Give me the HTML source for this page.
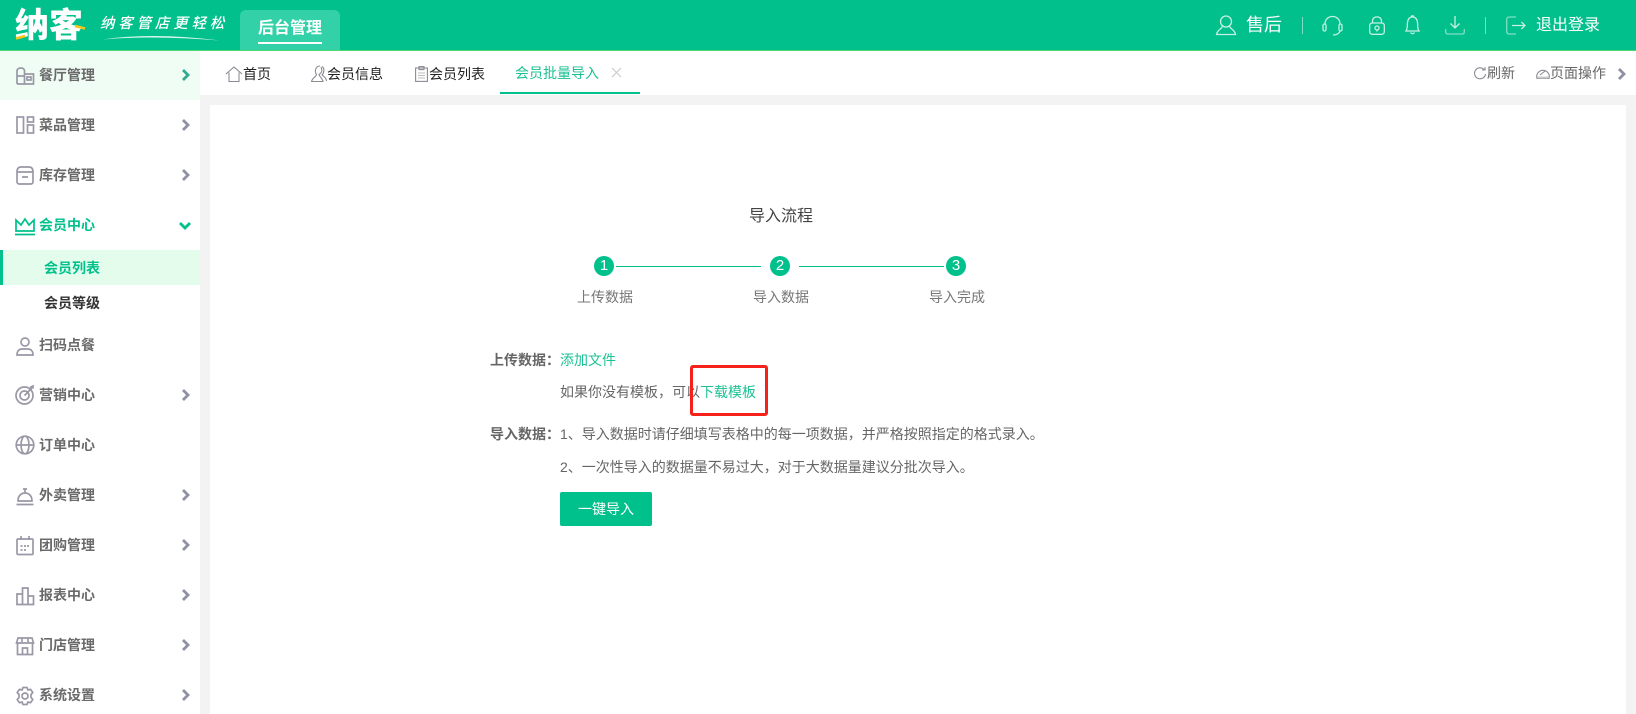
<!DOCTYPE html>
<html lang="zh-CN">
<head>
<meta charset="utf-8">
<title>会员批量导入</title>
<style>
html,body{margin:0;padding:0;width:1636px;height:714px;overflow:hidden;background:#f3f3f3}
body{position:relative;font-family:"Liberation Sans","Noto Sans CJK SC",sans-serif;font-size:14px;color:#666}
.b{position:absolute}
.t{position:absolute;line-height:20px;height:20px;white-space:nowrap}
.m{font-weight:700;color:#6a6a6a;left:39px}
svg{position:absolute;overflow:visible;fill:none}
.i{stroke:#9a98a6;stroke-width:1.7;width:20px;height:20px;left:15px}
.h{stroke:#c5f0e2;stroke-width:1.3;width:22px;height:22px}
.c{stroke:#8f90a4;stroke-width:2.800;width:8px;height:12px;left:182px}
.n{position:absolute;width:20px;height:20px;border-radius:50%;background:#00c08b;color:#fff;text-align:center;line-height:20px;font-size:15px}
</style>
</head>
<body>
<!-- header -->
<div class="b" style="left:0;top:0;width:1636px;height:50px;background:#02c08c"></div>
<div class="b" style="left:0;top:50px;width:1636px;height:1px;background:#4fd873"></div>
<div class="t" style="left:15px;top:8px;height:36px;line-height:36px;font-size:34px;font-weight:900;color:#fff">纳客</div>
<svg style="left:15px;top:30px;width:75px;height:12px"><path d="M1 8.500L10 6" stroke="#f5c518" stroke-width="2.500"/><path d="M60 -4L70 -1.500" stroke="#f5c518" stroke-width="2.500"/></svg>
<div class="t" style="left:100px;top:14px;font-size:14.500px;color:#fff;letter-spacing:3.800px;font-style:italic;font-weight:500">纳客管店更轻松</div>
<svg style="left:102px;top:33px;width:120px;height:10px"><path d="M1 6.500Q50 -1 118 7.500Q50 2 1 6.500Z" fill="#fff" fill-opacity=".85"/></svg>
<div class="b" style="left:240px;top:10px;width:100px;height:40px;background:#33d1a8;border-radius:6px 6px 0 0"></div>
<div class="t" style="left:258px;top:19px;font-size:16px;font-weight:700;color:#fff">后台管理</div>
<div class="b" style="left:258px;top:42px;width:64px;height:2px;background:#fff"></div>

<svg class="h" style="left:1216px;top:15px;width:20px;height:20px" viewBox="0 0 20 20"><circle cx="10" cy="6.500" r="5.500"/><path d="M6.500 11C6.500 13.500 1 15 .5 19.500H19.500C19 15 13.500 13.500 13.500 11"/></svg>
<div class="t" style="left:1246px;top:15px;font-size:18px;color:#fff">售后</div>
<div class="b" style="left:1302px;top:17px;width:1px;height:17px;background:#7fdcc2"></div>
<svg class="h" style="left:1322px;top:15px;width:21px;height:21px" viewBox="0 0 21 21"><path d="M3 9C3 -1 18 -1 18 9"/><rect x="1" y="9" width="3" height="7" rx="1.500"/><rect x="17" y="9" width="3" height="7" rx="1.500"/><path d="M18 16C17 19 14 20 11 20"/></svg>
<svg class="h" style="left:1369px;top:16px;width:16px;height:19px" viewBox="0 0 16 19"><rect x=".7" y="7" width="14.600" height="11.300" rx="2.500"/><path d="M3.500 7V5C3.500 -.5 12.500 -.5 12.500 5V7"/><circle cx="8" cy="12" r="2"/><path d="M8 14V15.500"/></svg>
<svg class="h" style="left:1405px;top:15px;width:15px;height:20px" viewBox="0 0 15 20"><path d="M1 16C3 13 2 10 2.500 7.500C3 3.500 5 2 7.500 2C10 2 12 3.500 12.500 7.500C13 10 12 13 14 16Z"/><path d="M6 1.500Q7.500 0 9 1.500M5.500 17.500Q7.500 20 9.500 17.500"/></svg>
<svg class="h" style="left:1445px;top:15px;width:20px;height:20px" viewBox="0 0 20 20"><path d="M10 1V13M5.500 8.500L10 13L14.500 8.500"/><path d="M.7 14V17C.7 18.500 1.500 19 3 19H17C18.500 19 19.300 18.500 19.300 17V14" stroke="#80dfc4"/></svg>
<div class="b" style="left:1485px;top:17px;width:1px;height:17px;background:#7fdcc2"></div>
<svg class="h" style="left:1506px;top:16px;width:20px;height:19px" viewBox="0 0 20 19"><path d="M10 1H3.500C1.500 1 .7 2 .7 3.500V15.500C.7 17 1.500 18 3.500 18H10" stroke="#80dfc4"/><path d="M6 9.500H19M15.500 6L19 9.500L15.500 13"/></svg>
<div class="t" style="left:1536px;top:16px;font-size:16px;color:#fff">退出登录</div>

<!-- sidebar -->
<div class="b" style="left:0;top:51px;width:200px;height:663px;background:#fff"></div>
<div class="b" style="left:0;top:51px;width:200px;height:49px;background:#f0fdf5"></div>
<div class="b" style="left:0;top:250px;width:200px;height:35px;background:#e3fcec"></div>
<div class="b" style="left:0;top:250px;width:3px;height:35px;background:#00c08b"></div>

<svg class="i" style="top:65px" viewBox="0 0 20 20"><path d="M2 19V6C2 4 4 3 6 3C8 3 9.500 4 9.500 6V19M2 19H18.500V9H9.500M2 11H9.500"/><rect x="12" y="12" width="4" height="3"/></svg>
<div class="t m" style="top:65px">餐厅管理</div>
<svg class="c" style="top:69px;stroke:#2fa98f" viewBox="0 0 8 12"><path d="M1 1L6 6L1 11"/></svg>

<svg class="i" style="top:115px" viewBox="0 0 20 20"><rect x="2" y="2" width="6.500" height="16"/><rect x="12.500" y="2" width="6" height="5"/><rect x="12.500" y="10" width="6" height="8"/></svg>
<div class="t m" style="top:115px">菜品管理</div>
<svg class="c" style="top:119px" viewBox="0 0 8 12"><path d="M1 1L6 6L1 11"/></svg>

<svg class="i" style="top:165px" viewBox="0 0 20 20"><path d="M2 7C2 3 4 2 6 2H14C16 2 18 3 18 7M2 7H18V17C18 18 17 19 16 19H4C3 19 2 18 2 17ZM7 12H13"/></svg>
<div class="t m" style="top:165px">库存管理</div>
<svg class="c" style="top:169px" viewBox="0 0 8 12"><path d="M1 1L6 6L1 11"/></svg>

<svg class="i" style="top:216px;stroke:#00c08b;left:15px" viewBox="0 0 20 20"><path d="M1 15V4L6 9L10 3L14 9L19 4V15ZM0 18.500H20"/></svg>
<div class="t m" style="top:215px;color:#00c08b">会员中心</div>
<svg class="c" style="top:222px;left:179px;width:12px;height:8px;stroke:#00c08b" viewBox="0 0 12 8"><path d="M1 1L6 6L11 1"/></svg>

<div class="t" style="left:44px;top:258px;font-weight:700;color:#00c08b">会员列表</div>
<div class="t" style="left:44px;top:293px;font-weight:700;color:#333">会员等级</div>

<svg class="i" style="top:336px" viewBox="0 0 20 20"><circle cx="10" cy="6" r="4"/><path d="M2 19C2 15 4 13 7 13H13C16 13 18 15 18 19Z"/></svg>
<div class="t m" style="top:335px">扫码点餐</div>

<svg class="i" style="top:385px" viewBox="0 0 20 20"><circle cx="9.500" cy="10.500" r="8.500"/><circle cx="9.500" cy="10.500" r="4.500"/><path d="M9.500 10.500L18 2M15 2.500L18 1V3.500"/></svg>
<div class="t m" style="top:385px">营销中心</div>
<svg class="c" style="top:389px" viewBox="0 0 8 12"><path d="M1 1L6 6L1 11"/></svg>

<svg class="i" style="top:435px" viewBox="0 0 20 20"><circle cx="10" cy="10" r="8.800"/><ellipse cx="10" cy="10" rx="4" ry="8.800"/><path d="M1.200 10H18.800"/></svg>
<div class="t m" style="top:435px">订单中心</div>

<svg class="i" style="top:486px" viewBox="0 0 20 20"><path d="M3 15C3 10 6 7 10 7C14 7 17 10 17 15ZM8 3H12M10 3V7M1.500 18.500H18.500"/></svg>
<div class="t m" style="top:485px">外卖管理</div>
<svg class="c" style="top:489px" viewBox="0 0 8 12"><path d="M1 1L6 6L1 11"/></svg>

<svg class="i" style="top:536px" viewBox="0 0 20 20"><rect x="2" y="3" width="16" height="15.500" rx="1"/><path d="M6 0V4M14 0V4"/><path d="M5.500 10H8M9 10H11M12 10H14.500M5.500 14H8M9 14H11" stroke-dasharray="2 1"/></svg>
<div class="t m" style="top:535px">团购管理</div>
<svg class="c" style="top:539px" viewBox="0 0 8 12"><path d="M1 1L6 6L1 11"/></svg>

<svg class="i" style="top:586px" viewBox="0 0 20 20"><path d="M2 18.500V8H7.500V18.500ZM7.500 18.500V2H13V18.500ZM13 18.500V10H18.500V18.500Z"/></svg>
<div class="t m" style="top:585px">报表中心</div>
<svg class="c" style="top:589px" viewBox="0 0 8 12"><path d="M1 1L6 6L1 11"/></svg>

<svg class="i" style="top:636px" viewBox="0 0 20 20"><path d="M3 2H17L18.500 7H1.500ZM2.500 7V18.500H17.500V7M7.500 18.500V12H12.500V18.500M7 2.500V6M13 2.500V6"/></svg>
<div class="t m" style="top:635px">门店管理</div>
<svg class="c" style="top:639px" viewBox="0 0 8 12"><path d="M1 1L6 6L1 11"/></svg>

<svg class="i" style="top:686px" viewBox="0 0 20 20"><path d="M8 1.500H12L12.800 4L15.500 3.300L17.800 6.500L16 8.500V11.500L17.800 13.500L15.500 16.700L12.800 16L12 18.500H8L7.200 16L4.500 16.700L2.200 13.500L4 11.500V8.500L2.200 6.500L4.500 3.300L7.200 4Z" stroke-linejoin="round"/><circle cx="10" cy="10" r="3"/></svg>
<div class="t m" style="top:685px">系统设置</div>
<svg class="c" style="top:689px" viewBox="0 0 8 12"><path d="M1 1L6 6L1 11"/></svg>

<!-- tabs -->
<div class="b" style="left:200px;top:51px;width:1436px;height:44px;background:#fff"></div>
<svg style="left:226px;top:66px;width:16px;height:16px;stroke:#8b8b95;stroke-width:1.100" viewBox="0 0 16 16"><path d="M0 8L8 1L16 8M3 6.500V15.500H13V6.500"/></svg>
<div class="t" style="left:243px;top:64px;color:#222">首页</div>
<svg style="left:311px;top:65px;width:16px;height:17px;stroke:#8b8b95;stroke-width:1.100" viewBox="0 0 16 17"><path d="M9 1C4 1 3.500 7 5.500 9.500C5 12 1 13 .6 16.500H12C11.500 13 8.500 12 8 9.500C10 8 12 7 10 2M11 1.500C14 3 13 8 11 10C12 11 15 12 15.500 16"/></svg>
<div class="t" style="left:327px;top:64px;color:#222">会员信息</div>
<svg style="left:415px;top:66px;width:13px;height:16px;stroke:#8b8b95;stroke-width:1.100" viewBox="0 0 13 16"><rect x=".6" y="2" width="11.800" height="13.400"/><rect x="4" y=".6" width="5" height="3"/><path d="M3 7H10M3 9.500H10M3 12H10" stroke="#bbb"/></svg>
<div class="t" style="left:429px;top:64px;color:#222">会员列表</div>
<div class="t" style="left:515px;top:63px;color:#1cc293">会员批量导入</div>
<svg style="left:612px;top:68px;width:9px;height:9px;stroke:#ccc;stroke-width:1.200" viewBox="0 0 9 9"><path d="M0 0L9 9M9 0L0 9"/></svg>
<div class="b" style="left:500px;top:92px;width:140px;height:2px;background:#00c08b"></div>

<svg style="left:1474px;top:67px;width:12px;height:13px;stroke:#8b8b95;stroke-width:1.100" viewBox="0 0 12 13"><path d="M10 2.500A5.500 5.500 0 1 0 11.500 7M8 3H11V0"/></svg>
<div class="t" style="left:1487px;top:63px">刷新</div>
<svg style="left:1536px;top:67px;width:14px;height:12px;stroke:#8b8b95;stroke-width:1.100" viewBox="0 0 14 12"><path d="M1 11.500A6.300 6.300 0 1 1 13 11.500Z"/><path d="M4 8L9 4"/><path d="M1.500 9.500H12.500V11.500H1.500Z" fill="#ccc" stroke="none"/></svg>
<div class="t" style="left:1550px;top:63px">页面操作</div>
<svg class="c" style="left:1618px;top:68px" viewBox="0 0 8 12"><path d="M1 1L6 6L1 11"/></svg>

<!-- content -->
<div class="b" style="left:210px;top:105px;width:1416px;height:609px;background:#fff"></div>

<div class="t" style="left:749px;top:205px;margin-top:2px;font-size:16px;color:#444">导入流程</div>
<div class="n" style="left:594px;top:256px">1</div>
<div class="n" style="left:770px;top:256px">2</div>
<div class="n" style="left:946px;top:256px">3</div>
<div class="b" style="left:616px;top:266px;width:145px;height:1px;background:#00c08b"></div>
<div class="b" style="left:799px;top:266px;width:145px;height:1px;background:#00c08b"></div>
<div class="t" style="left:577px;top:287px;color:#777">上传数据</div>
<div class="t" style="left:753px;top:287px;color:#777">导入数据</div>
<div class="t" style="left:929px;top:287px;color:#777">导入完成</div>

<div class="t" style="left:490px;top:350px;font-weight:700;color:#666">上传数据：</div>
<div class="t" style="left:560px;top:350px;color:#1cc293">添加文件</div>
<div class="t" style="left:560px;top:382px;color:#666">如果你没有模板，可以<span style="color:#1cc293">下载模板</span></div>
<div class="t" style="left:490px;top:424px;font-weight:700;color:#666">导入数据：</div>
<div class="t" style="left:560px;top:424px;color:#666">1、导入数据时请仔细填写表格中的每一项数据，并严格按照指定的格式录入。</div>
<div class="t" style="left:560px;top:457px;color:#666">2、一次性导入的数据量不易过大，对于大数据量建议分批次导入。</div>
<div class="b" style="left:560px;top:492px;width:92px;height:34px;line-height:34px;background:#00c08b;border-radius:2px;color:#fff;text-align:center">一键导入</div>

<div class="b" style="left:690px;top:365px;width:72px;height:45px;border:3px solid #f5221b;border-radius:3px"></div>
</body>
</html>
